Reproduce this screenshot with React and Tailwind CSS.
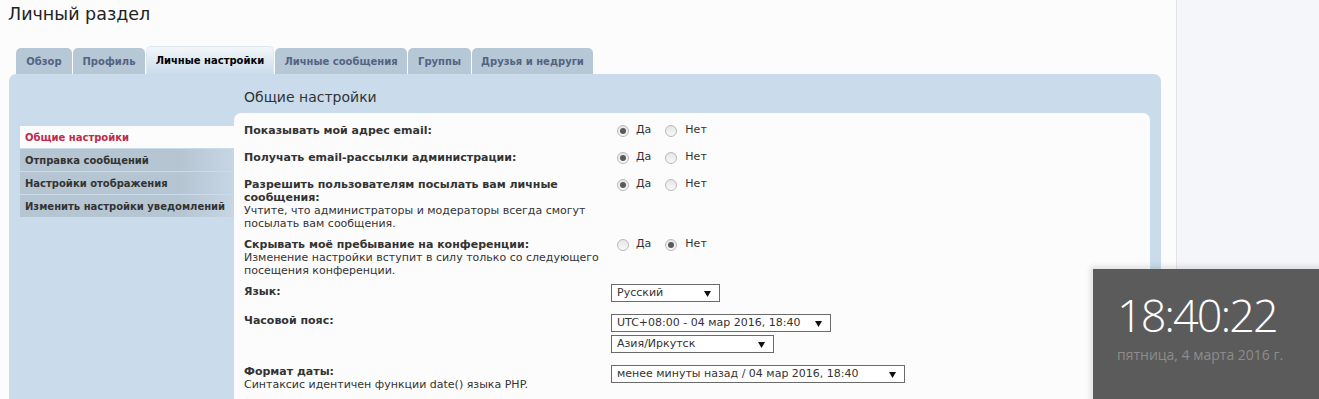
import React from 'react'

const tabs = [
  { label: 'Обзор', w: 'w-[56px]' },
  { label: 'Профиль', w: 'w-[72px]' },
  { label: 'Личные настройки', w: 'w-[128px]', active: true },
  { label: 'Личные сообщения', w: 'w-[132px]' },
  { label: 'Группы', w: 'w-[63px]' },
  { label: 'Друзья и недруги', w: 'w-[121px]' },
]

const navItems = [
  { label: 'Общие настройки', active: true },
  { label: 'Отправка сообщений' },
  { label: 'Настройки отображения' },
  { label: 'Изменить настройки уведомлений' },
]

// Radio dot, drawn by hand so it looks the same everywhere
const Radio = ({ checked }) => (
  <span className="flex items-center justify-center w-[12px] h-[12px] rounded-full border border-[#b9b9b9] bg-gradient-to-b from-[#e6e6e6] to-[#f8f8f8]">
    {checked && <span className="w-[6px] h-[6px] rounded-full bg-[#5a5a5a]" />}
  </span>
)

const YesNo = ({ yes }) => (
  <div className="flex items-center h-[13px] pl-[6px] text-[11px] text-[#333]">
    <Radio checked={yes} />
    <span className="ml-[7px] mr-[14px]">Да</span>
    <Radio checked={!yes} />
    <span className="ml-[8px]">Нет</span>
  </div>
)

const Select = ({ value, w }) => (
  <div className={`flex items-center justify-between h-[18px] ${w} border border-[#6a6a6a] bg-white pl-[5px] pr-[8px] text-[11px] text-[#333]`}>
    <span>{value}</span>
    <svg width="7" height="7" viewBox="0 0 7 7">
      <path d="M0 1 L7 1 L3.5 7 Z" fill="#111" />
    </svg>
  </div>
)

const Row = ({ className = '', label, note, children }) => (
  <div className={`flex ${className}`}>
    <div className="w-[367px] pr-[10px] text-[11px] leading-[13px] text-[#333]">
      <div className="font-bold">{label}</div>
      {note && <div>{note}</div>}
    </div>
    <div>{children}</div>
  </div>
)

export default function App() {
  return (
    <div className="relative flex h-[399px] overflow-hidden bg-[#fcfcfc] font-['DejaVu_Sans',sans-serif]">
      <div className="w-[1176px] shrink-0">
        <h1 className="pl-[8px] pt-[4px] h-[46px] text-[17.5px] leading-[21px] text-[#222]">Личный раздел</h1>

        {/* Tabs */}
        <div className="flex items-end gap-[1px] pl-[16px] h-[28px]">
          {tabs.map((t) =>
            t.active ? (
              <div
                key={t.label}
                className={`${t.w} h-[28px] flex items-center justify-center rounded-t-[5px] border border-b-0 border-[#dde7f0] bg-gradient-to-b from-[#f3f7fa] to-[#cadceb] text-[10px] font-bold text-black`}
              >
                {t.label}
              </div>
            ) : (
              <div
                key={t.label}
                className={`${t.w} h-[26px] flex items-center justify-center rounded-t-[5px] bg-[#b6c7d6] text-[10px] font-bold text-[#536482]`}
              >
                {t.label}
              </div>
            )
          )}
        </div>

        {/* Panel */}
        <div className="ml-[9px] w-[1152px] h-[400px] rounded-t-[7px] bg-[#cadceb] flex pl-[11px] pr-[11px]">
          <div className="w-[214px] pt-[52px] flex flex-col gap-[1px]">
            {navItems.map((n) =>
              n.active ? (
                <div key={n.label} className="h-[22px] flex items-center pl-[5px] bg-[#fcfcfc] text-[10px] font-bold whitespace-nowrap text-[#bc2a4d]">
                  {n.label}
                </div>
              ) : (
                <div
                  key={n.label}
                  className="h-[22px] flex items-center pl-[5px] bg-gradient-to-r from-[#b5c5d2] from-75% to-[#c6d6e4] text-[10px] font-bold whitespace-nowrap text-[#333]"
                >
                  {n.label}
                </div>
              )
            )}
          </div>

          <div className="flex-1">
            <h2 className="mt-[14px] mb-[7px] pl-[10px] h-[18px] text-[14px] leading-[18px] text-[#333]">Общие настройки</h2>
            <div className="h-[300px] rounded-t-[7px] bg-[#fcfcfc] px-[10px] pt-[11px]">
              <Row label="Показывать мой адрес email:">
                <YesNo yes />
              </Row>
              <Row className="mt-[14px]" label="Получать email-рассылки администрации:">
                <YesNo yes />
              </Row>
              <Row
                className="mt-[14px]"
                label="Разрешить пользователям посылать вам личные сообщения:"
                note="Учтите, что администраторы и модераторы всегда смогут посылать вам сообщения."
              >
                <YesNo yes />
              </Row>
              <Row
                className="mt-[8px]"
                label="Скрывать моё пребывание на конференции:"
                note="Изменение настройки вступит в силу только со следующего посещения конференции."
              >
                <YesNo yes={false} />
              </Row>
              <Row className="mt-[7px]" label={<span className="block pt-[1px]">Язык:</span>}>
                <Select value="Русский" w="w-[109px]" />
              </Row>
              <Row className="mt-[12px]" label="Часовой пояс:">
                <div className="flex flex-col gap-[3px]">
                  <Select value="UTC+08:00 - 04 мар 2016, 18:40" w="w-[220px]" />
                  <Select value="Азия/Иркутск" w="w-[163px]" />
                </div>
              </Row>
              <Row className="mt-[12px]" label="Формат даты:" note="Синтаксис идентичен функции date() языка PHP.">
                <Select value="менее минуты назад / 04 мар 2016, 18:40" w="w-[294px]" />
              </Row>
            </div>
          </div>
        </div>
      </div>

      <div className="flex-1 border-l border-[#e4e4e4] bg-[#f5f6fa]" />

      {/* Clock overlay */}
      <div className="absolute left-[1093px] top-[269px] w-[240px] h-[140px] bg-[#5b5b5b] shadow-[0_0_5px_3px_rgba(0,0,0,0.1)] pl-[24px] pt-[18px] font-['Open_Sans',sans-serif]">
        <div className="text-[45px] leading-[56px] font-light tracking-[-2px] text-white">18:40:22</div>
        <div className="mt-[3px] text-[14px] leading-[18px] text-[#8c8c8c]">пятница, 4 марта 2016 г.</div>
      </div>
    </div>
  )
}
